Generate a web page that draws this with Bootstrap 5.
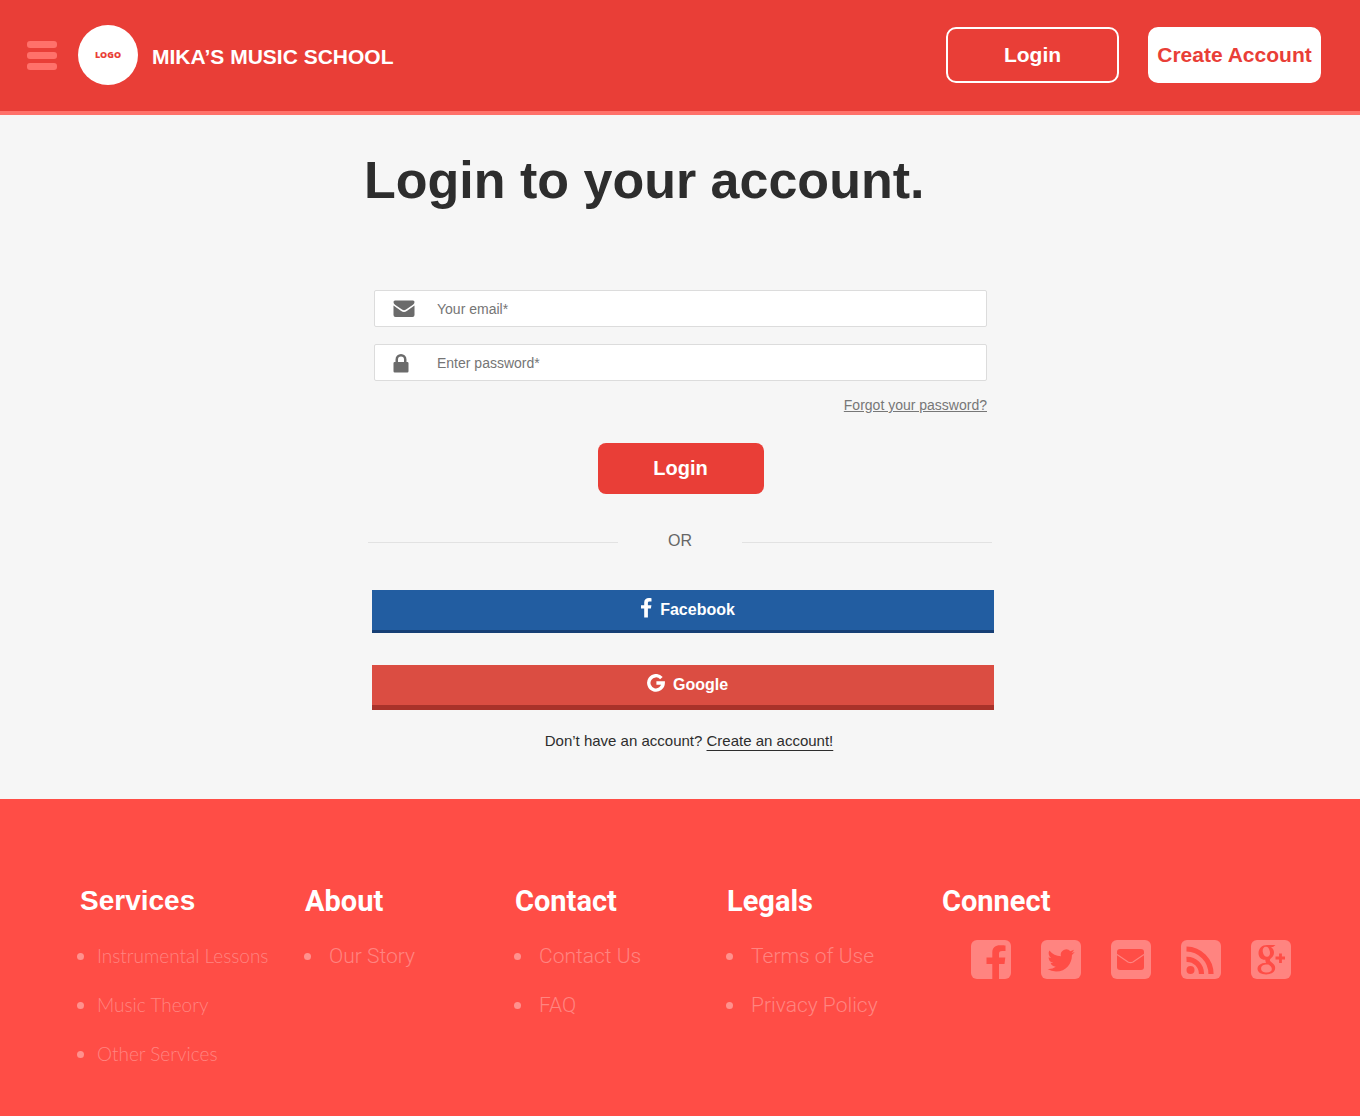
<!DOCTYPE html>
<html lang="en">
<head>
<meta charset="utf-8">
<meta name="viewport" content="width=device-width, initial-scale=1">
<title>Login – Mika’s Music School</title>
<link href="https://cdn.jsdelivr.net/npm/bootstrap@5.3.0/dist/css/bootstrap.min.css" rel="stylesheet">
<style>
  :root { --brand: #e93e37; --coral: #ff4d46; --blush: #ff716a; --soft: #ff8480; }
  body { font-family: "Liberation Sans", Arial, sans-serif; background: #f6f6f6; color: #2d2d2d; }
  .site-header { background: var(--brand); border-bottom: 4px solid var(--blush); padding: 25px 39px 26px 27px; }
  .menu-btn { width: 30px; gap: 4px; margin-right: 21px; }
  .menu-btn span { height: 7px; border-radius: 3px; background: var(--blush); }
  .logo-disc { width: 60px; height: 60px; margin-right: 14px; background: #fff; color: var(--brand); font: 800 9px/12px "Open Sans", sans-serif; }
  .brand-name { font-size: 21px; line-height: 28px; }
  .head-btn { width: 173px; height: 56px; border: 2px solid #fff; border-radius: 10px; font-size: 21px; line-height: 28px; padding: 0; }
  .head-btn-solid { background: #fff; color: var(--brand); }
  .head-actions { gap: 29px; }

  .login-panel { max-width: 632px; padding: 33px 0 46px; }
  .login-title { font-size: 52px; line-height: 64px; margin-bottom: 78px; }
  .login-fields { margin: 0 9px 0 10px; }
  .field-box { height: 37px; margin-bottom: 17px; background: #fff; border: 1px solid #dcdcdc; border-radius: 2px; }
  .field-icon { width: 62px; padding-left: 18px; color: #6b6b6b; }
  .field-box input { font-size: 14px; line-height: 20px; padding: 0; background: transparent; }
  .field-box input::placeholder { color: #757575; opacity: 1; }
  .forgot-link { font-size: 14px; line-height: 20px; color: #777; margin-top: -3px; }
  .submit-btn { width: 166px; height: 51px; margin-top: 28px; background: var(--brand); border-radius: 8px; font-size: 20px; line-height: 28px; padding: 0 0 2px; }
  .or-row { margin: 35px 4px 37px; gap: 50px; font-size: 16px; line-height: 24px; color: #666; }
  .or-row hr { margin: 2px 0 0; opacity: 1; color: #e2e2e2; }
  .social-btn { font-size: 16px; line-height: 24px; gap: 8px; border-radius: 0; padding: 8px 0 8px 9px; }
  .social-btn svg { margin-bottom: 4px; }
  .social-stack { margin: 0 2px 0 8px; gap: 32px; }
  .btn-fb { background: #225da1; border: 0 solid #163f75; border-bottom-width: 3px; }
  .btn-goog { background: #db4d42; border: 0 solid #a9322a; border-bottom-width: 5px; }
  .signup-line { font-size: 15px; line-height: 24px; margin: 19px 0 0; padding-left: 18px; }
  .signup-line a { text-underline-offset: 4px; }

  .site-footer { background: var(--coral); padding: 84px 40px 40px 80px; }
  .foot-grid { display: grid; grid-template-columns: 225fr 210fr 212fr 215fr 378fr; }
  .foot-title { font: 700 29px/36px Roboto, sans-serif; margin-bottom: 21px; }
  .foot-title-arial { font-family: "Liberation Sans", Arial, sans-serif; font-size: 28px; }
  .foot-list { margin-left: -1px; padding-top: 2px; gap: 21px; font: 300 21px/28px Roboto, sans-serif; }
  .foot-list li { gap: 18px; }
  .foot-list li::before { content: ""; width: 7px; height: 7px; border-radius: 50%; background: #ff918d; }
  .foot-list a { color: var(--soft); }
  .foot-list-thin { font-family: Lato, sans-serif; font-size: 19px; margin-left: -3px; }
  .foot-list-thin li { gap: 13px; }
  .share-row { gap: 30px; margin-left: 29px; }
  .share-row svg { display: block; }
  @media (max-width: 1100px) {
    .foot-grid { grid-template-columns: repeat(auto-fit, minmax(220px, 1fr)); gap: 40px; }
    .share-row { margin-left: 0; gap: 16px; }
  }
  @media (max-width: 767px) {
    .login-title { font-size: 36px; line-height: 44px; }
    .login-panel { padding-left: 12px; padding-right: 12px; }
  }
</style>
<script src="https://cdn.jsdelivr.net/npm/bootstrap@5.3.0/dist/js/bootstrap.bundle.min.js"></script>
</head>
<body class="d-flex flex-column min-vh-100">
<header class="site-header d-flex flex-wrap align-items-center justify-content-between gap-3">
  <div class="d-flex align-items-center">
    <button type="button" class="menu-btn btn p-0 border-0 d-flex flex-column" aria-label="Menu"><span class="w-100"></span><span class="w-100"></span><span class="w-100"></span></button>
    <a href="#" class="d-flex align-items-center text-white text-decoration-none">
      <span class="logo-disc rounded-circle d-flex align-items-center justify-content-center">LOGO</span>
      <span class="brand-name fw-bold pt-1">MIKA’S MUSIC SCHOOL</span>
    </a>
  </div>
  <div class="head-actions d-flex flex-wrap">
    <button type="button" class="head-btn btn text-white fw-bold">Login</button>
    <button type="button" class="head-btn head-btn-solid btn fw-bold">Create Account</button>
  </div>
</header>

<main class="login-panel w-100 mx-auto">
  <h1 class="login-title fw-bold">Login to your account.</h1>
  <form class="login-fields d-flex flex-column">
    <div class="field-box d-flex align-items-center">
      <label class="field-icon flex-shrink-0 d-flex" for="email" aria-label="Your email">
        <svg width="22" height="18" viewBox="0 0 22 18" fill="currentColor"><path d="M2 .500h18q1.500 0 1.500 1.500Q21.500 3.500 20 4.700L13 9.500q-2 1.400-4 0L2 4.700Q.500 3.500.500 2 .500.500 2 .500z"/><path d="M.500 5.500l7.700 5.400q2.800 2 5.600 0L21.500 5.500v9.500q0 2-2 2h-17q-2 0-2-2z"/></svg>
      </label>
      <input id="email" type="email" class="form-control border-0 shadow-none" placeholder="Your email*">
    </div>
    <div class="field-box d-flex align-items-center">
      <label class="field-icon flex-shrink-0 d-flex" for="password" aria-label="Enter password">
        <svg width="16" height="20" viewBox="0 0 16 20" fill="currentColor"><path fill-rule="evenodd" d="M2.500 9V6.500a5.500 5.500 0 0 1 11 0V9h.800q1.200 0 1.200 1.200v8.100q0 1.200-1.200 1.200H1.700Q.500 19.500.500 18.300v-8.100Q.500 9 1.700 9zM5 9h6V6.500a3 3 0 0 0-6 0z"/></svg>
      </label>
      <input id="password" type="password" class="form-control border-0 shadow-none" placeholder="Enter password*">
    </div>
    <a href="#" class="forgot-link align-self-end">Forgot your password?</a>
    <button type="submit" class="submit-btn btn text-white fw-bold align-self-center">Login</button>
  </form>
  <div class="or-row d-flex align-items-center"><hr class="flex-fill"><span>OR</span><hr class="flex-fill"></div>
  <div class="social-stack d-flex flex-column">
    <button type="button" class="social-btn btn-fb btn text-white fw-bold d-flex align-items-center justify-content-center">
      <svg width="12" height="20" viewBox="0 0 12 20" fill="currentColor"><path d="M11.500.300v3.200H9.600C8.200 3.500 7.900 4.200 7.900 5.200v2h3.500l-.500 3.400h-3V19.500H4.200v-8.900H1V7.200h3.200V4.600C4.200 1.600 6.100 0 8.800 0c1.300 0 2.300.100 2.700.300z"/></svg>
      <span>Facebook</span>
    </button>
    <button type="button" class="social-btn btn-goog btn text-white fw-bold d-flex align-items-center justify-content-center">
      <svg width="18" height="18" viewBox="0 0 18 18" fill="none" stroke="currentColor" stroke-width="3.400"><path d="M14.400 4.100A7.200 7.200 0 1 0 16.200 9H9.400"/></svg>
      <span>Google</span>
    </button>
  </div>
  <p class="signup-line text-center">Don’t have an account? <a href="#" class="text-reset">Create an account!</a></p>
</main>

<footer class="site-footer flex-grow-1">
  <div class="foot-grid">
    <section>
      <h2 class="foot-title foot-title-arial text-white">Services</h2>
      <ul class="foot-list foot-list-thin list-unstyled d-flex flex-column mb-0">
        <li class="d-flex align-items-center"><a href="#" class="text-decoration-none">Instrumental Lessons</a></li>
        <li class="d-flex align-items-center"><a href="#" class="text-decoration-none">Music Theory</a></li>
        <li class="d-flex align-items-center"><a href="#" class="text-decoration-none">Other Services</a></li>
      </ul>
    </section>
    <section>
      <h2 class="foot-title text-white">About</h2>
      <ul class="foot-list list-unstyled d-flex flex-column mb-0">
        <li class="d-flex align-items-center"><a href="#" class="text-decoration-none">Our Story</a></li>
      </ul>
    </section>
    <section>
      <h2 class="foot-title text-white">Contact</h2>
      <ul class="foot-list list-unstyled d-flex flex-column mb-0">
        <li class="d-flex align-items-center"><a href="#" class="text-decoration-none">Contact Us</a></li>
        <li class="d-flex align-items-center"><a href="#" class="text-decoration-none">FAQ</a></li>
      </ul>
    </section>
    <section>
      <h2 class="foot-title text-white">Legals</h2>
      <ul class="foot-list list-unstyled d-flex flex-column mb-0">
        <li class="d-flex align-items-center"><a href="#" class="text-decoration-none">Terms of Use</a></li>
        <li class="d-flex align-items-center"><a href="#" class="text-decoration-none">Privacy Policy</a></li>
      </ul>
    </section>
    <section>
      <h2 class="foot-title text-white">Connect</h2>
      <div class="share-row d-flex flex-wrap">
        <a href="#" aria-label="Facebook"><svg width="40" height="40" viewBox="0 0 40 40"><rect width="40" height="39" rx="6" fill="#ff8480"/><path fill="#ff4d46" d="M34.500 5.500V11h-3.300c-2.600 0-3.200 1.200-3.200 3v3.500h6.300L33.500 24H28v16h-6.700V24H15.500v-6.500h5.800v-5c0-5 3.200-7.300 7.700-7.300 2.500 0 4.800.100 5.500.300z"/></svg></a>
        <a href="#" aria-label="Twitter"><svg width="40" height="40" viewBox="0 0 40 40"><rect width="40" height="39" rx="6" fill="#ff8480"/><path fill="#ff4d46" transform="translate(6.500 6) scale(1.700)" d="M5.026 15c6.038 0 9.341-5.003 9.341-9.334 0-.14 0-.282-.006-.422A6.685 6.685 0 0 0 16 3.542a6.658 6.658 0 0 1-1.889.518 3.301 3.301 0 0 0 1.447-1.817 6.533 6.533 0 0 1-2.087.793A3.286 3.286 0 0 0 7.875 6.03a9.325 9.325 0 0 1-6.767-3.429 3.289 3.289 0 0 0 1.018 4.382A3.323 3.323 0 0 1 .64 6.575v.045a3.288 3.288 0 0 0 2.632 3.218 3.203 3.203 0 0 1-.865.115 3.230 3.230 0 0 1-.614-.057 3.283 3.283 0 0 0 3.067 2.277A6.588 6.588 0 0 1 .78 13.580a6.320 6.320 0 0 1-.78-.045A9.344 9.344 0 0 0 5.026 15z"/></svg></a>
        <a href="#" aria-label="Email"><svg width="40" height="40" viewBox="0 0 40 40"><rect width="40" height="39" rx="6" fill="#ff8480"/><rect x="6" y="9" width="27" height="21" rx="3" fill="#ff4d46"/><path d="M6 14.500l11 7.500q2.500 1.400 5 0l11-7.500" fill="none" stroke="#ff8480" stroke-width="1.200"/></svg></a>
        <a href="#" aria-label="RSS"><svg width="40" height="40" viewBox="0 0 40 40"><rect width="40" height="39" rx="6" fill="#ff8480"/><circle cx="9.500" cy="30" r="4" fill="#ff4d46"/><path d="M5.500 19.300A14.500 14.500 0 0 1 20.500 34M5.500 9A25 25 0 0 1 30 34" fill="none" stroke="#ff4d46" stroke-width="5.200"/></svg></a>
        <a href="#" aria-label="Google Plus"><svg width="40" height="40" viewBox="0 0 40 40"><rect width="40" height="39" rx="6" fill="#ff8480"/><path fill="#ff4d46" fill-rule="evenodd" d="M24.500 5l-2.500 2h-2c2 1.500 3 3.300 3 5.500 0 3-1.500 4.500-3 5.800-1.700 1.400-1.600 2.400.200 3.700 2.600 1.900 4 3.500 4 6 0 4-4 6.500-9 6.500-5.200 0-8.700-2.200-8.700-5.700 0-3.300 3-5.800 8.700-6.100-.800-1-1.100-2-.700-3-4.300.200-7-2.700-7-6.500C7.500 8.500 11 5 16 5zM14.800 6.800c-2.300.200-3.500 2.200-3 5.200.500 3 2.300 5 4.400 4.800 2.200-.200 3.100-2.200 2.700-5-.500-3.200-2.100-5.200-4.100-5zM16 24.500c-3.600 0-5.900 1.500-5.900 3.900 0 2.500 2.300 4.100 5.700 4.100 3.200 0 5-1.300 5-3.500 0-1.900-1.300-2.900-3.400-4.400z"/><path d="M29.500 13.500v9.500M24.500 18h9.500" fill="none" stroke="#ff4d46" stroke-width="2.800"/></svg></a>
      </div>
    </section>
  </div>
</footer>
</body>
</html>
